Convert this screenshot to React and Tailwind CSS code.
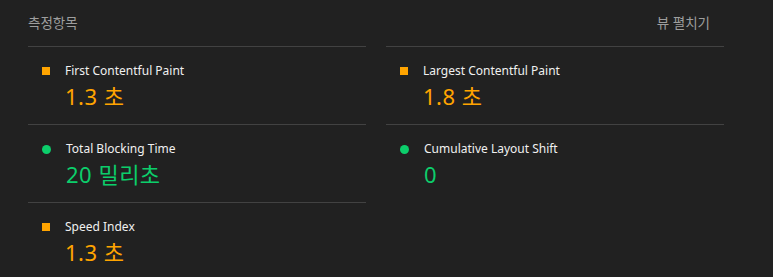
import React from "react";

const metrics = [
  { title: "First Contentful Paint", value: "1.3 초", rating: "average" },
  { title: "Largest Contentful Paint", value: "1.8 초", rating: "average" },
  { title: "Total Blocking Time", value: "20 밀리초", rating: "pass" },
  { title: "Cumulative Layout Shift", value: "0", rating: "pass" },
  { title: "Speed Index", value: "1.3 초", rating: "average" },
];

const Marker = ({ rating }) =>
  rating === "pass" ? (
    <span className="mt-[5px] h-[9px] w-[9px] shrink-0 rounded-full bg-[#0cce6b]" />
  ) : (
    <span className="mt-[5px] h-2 w-2 shrink-0 bg-[#ffa400]" />
  );

const Metric = ({ title, value, rating }) => (
  <div className="flex h-[78px] border-t border-[#424242] pl-[14px] pt-[15px]">
    <Marker rating={rating} />
    <div className="ml-[15px] flex flex-col">
      <span className="text-[12px] leading-[18px] text-[#f0f0f0]">{title}</span>
      <span
        className={
          "mt-[1px] text-[22px] leading-[30px] tracking-[0.5px] " +
          (rating === "pass" ? "text-[#0cce6b]" : "text-[#ffa400]")
        }
      >
        {value}
      </span>
    </div>
  </div>
);

export default function App() {
  return (
    <div
      className="h-[277px] w-[773px] overflow-hidden bg-[#212121] px-[28px] pt-[13px]"
      style={{ fontFamily: '"Noto Sans", "Noto Sans CJK KR", sans-serif' }}
    >
      <div className="w-[696px]">
        <div className="flex h-[33px] items-start justify-between pr-[14px] text-[13.5px] leading-[20px] text-[#9e9e9e]">
          <span>측정항목</span>
          <span>뷰 펼치기</span>
        </div>
        <div className="grid grid-cols-2 gap-x-5">
          {metrics.map((m) => (
            <Metric key={m.title} {...m} />
          ))}
        </div>
      </div>
    </div>
  );
}
